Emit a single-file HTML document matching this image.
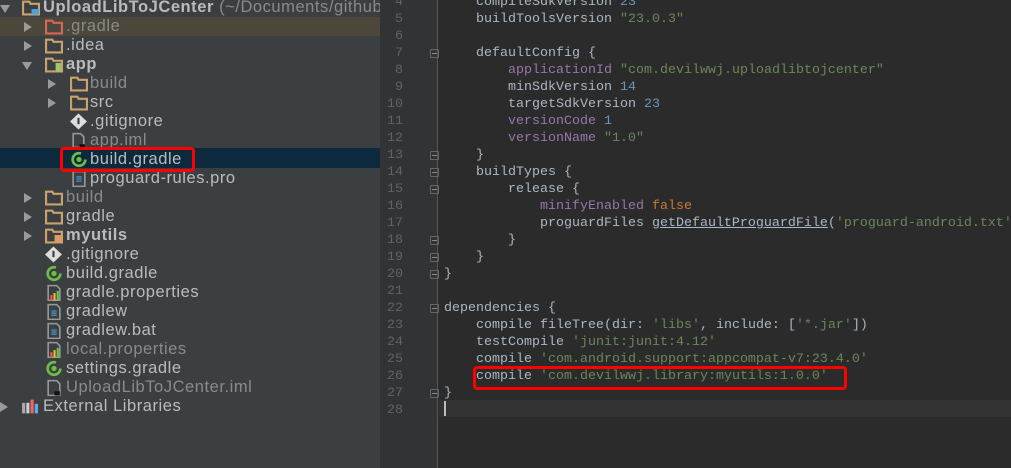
<!DOCTYPE html>
<html><head><meta charset="utf-8"><style>
*{margin:0;padding:0;box-sizing:border-box}
html,body{width:1011px;height:468px;overflow:hidden}
body{background:#2b2b2b;position:relative;font-family:"Liberation Sans",sans-serif}
#tree{position:absolute;left:0;top:0;width:380px;height:468px;background:#3c3f41;overflow:hidden}
.r{position:absolute;left:0;width:380px;height:19px;line-height:19px;font-size:16.5px;letter-spacing:.55px;color:#bbbbbb;white-space:nowrap}
.r span.t{position:absolute;top:0}
.ar{position:absolute;top:5px;width:0;height:0}
.ar.c{border-left:8px solid #9a9a9a;border-top:5px solid transparent;border-bottom:5px solid transparent}
.ar.o{top:7px;border-top:8px solid #9a9a9a;border-left:5px solid transparent;border-right:5px solid transparent}
.ic{position:absolute;top:1px;width:18px;height:17px}
.dim{color:#8a8a8a}
#gut{position:absolute;left:380px;top:0;width:58px;height:468px;background:#313335;border-right:1px solid #555}
#code{position:absolute;left:380px;top:-6px;width:631px;font-family:"Liberation Mono",monospace;font-size:13.33px;line-height:17px;color:#a9b7c6}
.l{height:17px;position:relative}
.n{position:absolute;left:0;width:23px;text-align:right;color:#606366}
.c{position:absolute;left:64px;white-space:pre}
.p{color:#9876aa}.s{color:#6a8759}.nu{color:#6897bb}.k{color:#cc7832}
.u{text-decoration:underline}
.f{position:absolute;left:50px;top:4px;width:9px;height:9px;border:1px solid #666;border-radius:1px}
.f:after{content:"";position:absolute;left:1px;top:3px;width:5px;height:1px;background:#888}
.box{position:absolute;border:3px solid #f00;border-radius:4px}
</style></head><body>
<div id="tree">
<div style="position:absolute;left:0;top:17px;width:380px;height:19px;background:#4b473b"></div>
<div style="position:absolute;left:0;top:148px;width:380px;height:20px;background:#0d293e"></div>

<div class="r" style="top:-2px"><div class="ar o" style="left:0"></div><svg class="ic" style="left:22px" viewBox="0 0 17 15"><path d="M1 2h6l1 2h8v10H1z" fill="none" stroke="#c9a26d" stroke-width="2"/><rect x="9" y="9" width="7" height="5" fill="#4aa3df"/></svg><span class="t" style="left:43px"><b>UploadLibToJCenter</b> <span class="dim">(~/Documents/github</span></span></div>

<div class="r" style="top:17px"><div class="ar c" style="left:24px"></div><svg class="ic" style="left:45px" viewBox="0 0 17 15"><path d="M1 2h6l1 2h8v10H1z" fill="none" stroke="#d9645a" stroke-width="2"/></svg><span class="t dim" style="left:66px">.gradle</span></div>
<div class="r" style="top:36px"><div class="ar c" style="left:24px"></div><svg class="ic" style="left:45px" viewBox="0 0 17 15"><path d="M1 2h6l1 2h8v10H1z" fill="none" stroke="#c9a26d" stroke-width="2"/></svg><span class="t" style="left:66px">.idea</span></div>
<div class="r" style="top:55px"><div class="ar o" style="left:22px"></div><svg class="ic" style="left:45px" viewBox="0 0 17 15"><path d="M1 2h6l1 2h8v10H1z" fill="none" stroke="#c9a26d" stroke-width="2"/><rect x="10" y="6" width="5" height="8" fill="#9c6"/></svg><span class="t" style="left:66px"><b>app</b></span></div>
<div class="r" style="top:74px"><div class="ar c" style="left:48px"></div><svg class="ic" style="left:70px" viewBox="0 0 17 15"><path d="M1 2h6l1 2h8v10H1z" fill="none" stroke="#c9a26d" stroke-width="2"/></svg><span class="t dim" style="left:90px">build</span></div>
<div class="r" style="top:93px"><div class="ar c" style="left:48px"></div><svg class="ic" style="left:70px" viewBox="0 0 17 15"><path d="M1 2h6l1 2h8v10H1z" fill="none" stroke="#c9a26d" stroke-width="2"/></svg><span class="t" style="left:90px">src</span></div>
<div class="r" style="top:112px"><svg class="ic" style="left:70px" viewBox="0 0 17 15"><path d="M8 0l8 7.5-8 7.5-8-7.5z" fill="#ddd"/><rect x="7" y="4" width="2" height="6" fill="#3c3f41"/></svg><span class="t" style="left:90px">.gitignore</span></div>
<div class="r" style="top:131px"><svg class="ic" style="left:70px" viewBox="0 0 17 15"><path d="M3 1h7l3 3v10H3z" fill="none" stroke="#999" stroke-width="1.5"/><rect x="9" y="11" width="5" height="4" fill="#111"/></svg><span class="t dim" style="left:90px">app.iml</span></div>
<div class="r" style="top:150px"><svg class="ic" style="left:70px" viewBox="0 0 17 15"><circle cx="8.5" cy="7.5" r="6" fill="none" stroke="#6cbd45" stroke-width="2.5" stroke-dasharray="30 8"/><circle cx="8.5" cy="7.5" r="2.5" fill="#6cbd45"/></svg><span class="t" style="left:90px">build.gradle</span></div>
<div class="r" style="top:169px"><svg class="ic" style="left:70px" viewBox="0 0 17 15"><path d="M3 1h11v14H3z" fill="none" stroke="#999" stroke-width="1.5"/><path d="M6 6h5M6 8h5M6 10h5" stroke="#4aa3df"/></svg><span class="t" style="left:90px">proguard-rules.pro</span></div>
<div class="r" style="top:188px"><div class="ar c" style="left:24px"></div><svg class="ic" style="left:45px" viewBox="0 0 17 15"><path d="M1 2h6l1 2h8v10H1z" fill="none" stroke="#c9a26d" stroke-width="2"/></svg><span class="t dim" style="left:66px">build</span></div>
<div class="r" style="top:207px"><div class="ar c" style="left:24px"></div><svg class="ic" style="left:45px" viewBox="0 0 17 15"><path d="M1 2h6l1 2h8v10H1z" fill="none" stroke="#c9a26d" stroke-width="2"/></svg><span class="t" style="left:66px">gradle</span></div>
<div class="r" style="top:226px"><div class="ar c" style="left:24px"></div><svg class="ic" style="left:45px" viewBox="0 0 17 15"><path d="M1 2h6l1 2h8v10H1z" fill="none" stroke="#c9a26d" stroke-width="2"/><rect x="9" y="7" width="7" height="7" fill="#d96"/></svg><span class="t" style="left:66px"><b>myutils</b></span></div>
<div class="r" style="top:245px"><svg class="ic" style="left:45px" viewBox="0 0 17 15"><path d="M8 0l8 7.5-8 7.5-8-7.5z" fill="#ddd"/><rect x="7" y="4" width="2" height="6" fill="#3c3f41"/></svg><span class="t" style="left:66px">.gitignore</span></div>
<div class="r" style="top:264px"><svg class="ic" style="left:45px" viewBox="0 0 17 15"><circle cx="8.5" cy="7.5" r="6" fill="none" stroke="#6cbd45" stroke-width="2.5" stroke-dasharray="30 8"/><circle cx="8.5" cy="7.5" r="2.5" fill="#6cbd45"/></svg><span class="t" style="left:66px">build.gradle</span></div>
<div class="r" style="top:283px"><svg class="ic" style="left:45px" viewBox="0 0 17 15"><path d="M3 1h8l3 3v11H3z" fill="none" stroke="#999" stroke-width="1.5"/><rect x="5" y="10" width="2" height="5" fill="#e55"/><rect x="8" y="8" width="2" height="7" fill="#eb3"/><rect x="11" y="6" width="2" height="9" fill="#6c4"/></svg><span class="t" style="left:66px">gradle.properties</span></div>
<div class="r" style="top:302px"><svg class="ic" style="left:45px" viewBox="0 0 17 15"><path d="M3 1h8l3 3v11H3z" fill="none" stroke="#999" stroke-width="1.5"/><path d="M6 7h5M6 9h5M6 11h5" stroke="#4aa3df"/></svg><span class="t" style="left:66px">gradlew</span></div>
<div class="r" style="top:321px"><svg class="ic" style="left:45px" viewBox="0 0 17 15"><path d="M3 1h8l3 3v11H3z" fill="none" stroke="#999" stroke-width="1.5"/><path d="M6 7h5M6 9h5M6 11h5" stroke="#4aa3df"/></svg><span class="t" style="left:66px">gradlew.bat</span></div>
<div class="r" style="top:340px"><svg class="ic" style="left:45px" viewBox="0 0 17 15"><path d="M3 1h8l3 3v11H3z" fill="none" stroke="#999" stroke-width="1.5"/><rect x="5" y="10" width="2" height="5" fill="#e55"/><rect x="8" y="8" width="2" height="7" fill="#eb3"/><rect x="11" y="6" width="2" height="9" fill="#6c4"/></svg><span class="t dim" style="left:66px">local.properties</span></div>
<div class="r" style="top:359px"><svg class="ic" style="left:45px" viewBox="0 0 17 15"><circle cx="8.5" cy="7.5" r="6" fill="none" stroke="#6cbd45" stroke-width="2.5" stroke-dasharray="30 8"/><circle cx="8.5" cy="7.5" r="2.5" fill="#6cbd45"/></svg><span class="t" style="left:66px">settings.gradle</span></div>
<div class="r" style="top:378px"><svg class="ic" style="left:45px" viewBox="0 0 17 15"><path d="M3 1h8l3 3v11H3z" fill="none" stroke="#999" stroke-width="1.5"/><rect x="9" y="11" width="5" height="4" fill="#111"/></svg><span class="t dim" style="left:66px">UploadLibToJCenter.iml</span></div>
<div class="r" style="top:397px"><div class="ar c" style="left:0"></div><svg class="ic" style="left:21px" viewBox="0 0 17 15"><rect x="1" y="4" width="3" height="10" fill="#aaa"/><rect x="5" y="4" width="3" height="10" fill="#ccc"/><rect x="9" y="1" width="3" height="13" fill="#e66"/><rect x="13" y="5" width="3" height="9" fill="#6ae"/></svg><span class="t" style="left:43px">External Libraries</span></div>
</div>

<div id="gut"></div>
<div style="position:absolute;left:439px;top:400px;width:572px;height:17px;background:#323232"></div>
<div style="position:absolute;left:444px;top:401px;width:2px;height:15px;background:#bbb"></div>

<div id="code"><div class="l"><span class="n">4</span><span class="c">    compileSdkVersion <span class="nu">23</span></span></div><div class="l"><span class="n">5</span><span class="c">    buildToolsVersion <span class="s">"23.0.3"</span></span></div><div class="l"><span class="n">6</span></div><div class="l"><span class="n">7</span><span class="f"></span><span class="c">    defaultConfig {</span></div><div class="l"><span class="n">8</span><span class="c">        <span class="p">applicationId</span> <span class="s">"com.devilwwj.uploadlibtojcenter"</span></span></div><div class="l"><span class="n">9</span><span class="c">        minSdkVersion <span class="nu">14</span></span></div><div class="l"><span class="n">10</span><span class="c">        targetSdkVersion <span class="nu">23</span></span></div><div class="l"><span class="n">11</span><span class="c">        <span class="p">versionCode</span> <span class="nu">1</span></span></div><div class="l"><span class="n">12</span><span class="c">        <span class="p">versionName</span> <span class="s">"1.0"</span></span></div><div class="l"><span class="n">13</span><span class="f"></span><span class="c">    }</span></div><div class="l"><span class="n">14</span><span class="f"></span><span class="c">    buildTypes {</span></div><div class="l"><span class="n">15</span><span class="f"></span><span class="c">        release {</span></div><div class="l"><span class="n">16</span><span class="c">            <span class="p">minifyEnabled</span> <span class="k">false</span></span></div><div class="l"><span class="n">17</span><span class="c">            proguardFiles <span class="u">getDefaultProguardFile</span>(<span class="s">'proguard-android.txt'</span></span></div><div class="l"><span class="n">18</span><span class="f"></span><span class="c">        }</span></div><div class="l"><span class="n">19</span><span class="f"></span><span class="c">    }</span></div><div class="l"><span class="n">20</span><span class="f"></span><span class="c">}</span></div><div class="l"><span class="n">21</span></div><div class="l"><span class="n">22</span><span class="f"></span><span class="c">dependencies {</span></div><div class="l"><span class="n">23</span><span class="c">    compile fileTree(dir: <span class="s">'libs'</span>, include: [<span class="s">'*.jar'</span>])</span></div><div class="l"><span class="n">24</span><span class="c">    testCompile <span class="s">'junit:junit:4.12'</span></span></div><div class="l"><span class="n">25</span><span class="c">    compile <span class="s">'com.android.support:appcompat-v7:23.4.0'</span></span></div><div class="l"><span class="n">26</span><span class="c">    compile <span class="s">'com.devilwwj.library:myutils:1.0.0'</span></span></div><div class="l"><span class="n">27</span><span class="f"></span><span class="c">}</span></div><div class="l"><span class="n">28</span></div></div>

<div class="box" style="left:473px;top:366px;width:374px;height:24px"></div>
<div class="box" style="left:60px;top:147px;width:135px;height:25px"></div>
</body></html>
